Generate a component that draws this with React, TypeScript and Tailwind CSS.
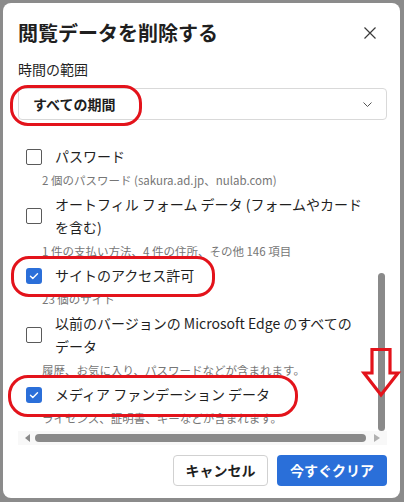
import React from 'react';

const font = { fontFamily: '"Noto Sans CJK JP", "Noto Sans", sans-serif' };

const items = [
  { lines: ['パスワード'], sub: '2 個のパスワード (sakura.ad.jp、nulab.com)', checked: false },
  { lines: ['オートフィル フォーム データ (フォームやカード', 'を含む)'], sub: '1 件の支払い方法、4 件の住所、その他 146 項目', checked: false },
  { lines: ['サイトのアクセス許可'], sub: '23 個のサイト', checked: true },
  { lines: ['以前のバージョンの Microsoft Edge のすべての', 'データ'], sub: '履歴、お気に入り、パスワードなどが含まれます。', checked: false },
  { lines: ['メディア ファンデーション データ'], sub: 'ライセンス、証明書、キーなどが含まれます。', checked: true },
];

function Checkbox({ checked }: { checked: boolean }) {
  if (checked) {
    return (
      <div className="w-[16px] h-[16px] shrink-0 rounded-[3px] bg-[#2b6fd9] flex items-center justify-center">
        <svg width="16" height="16" viewBox="0 0 16 16">
          <path d="M4.5 8.3l2.3 2.2L11.5 5.8" fill="none" stroke="#fff" strokeWidth="1.4" strokeLinecap="round" strokeLinejoin="round" />
        </svg>
      </div>
    );
  }
  return <div className="w-[16px] h-[16px] shrink-0 rounded-[2px] border border-[#5a5a5a] bg-white" />;
}

export default function App() {
  return (
    <div className="relative w-[404px] h-[502px] bg-[#8b8b8b] pt-[3px] pl-[3px]" style={font}>
      <div className="w-[397px] h-[495px] bg-white rounded-[8px] flex flex-col pl-[15px] pr-[13px] text-[#1f1f1f]">
        {/* header */}
        <div className="pt-[16px] flex items-center justify-between h-[44px]">
          <h1 className="text-[20px] leading-[28px] font-semibold">閲覧データを削除する</h1>
          <svg width="12" height="12" viewBox="0 0 12 12" className="mr-[11px]">
            <path d="M0.5 0.5L11.5 11.5M11.5 0.5L0.5 11.5" stroke="#3a3a3a" strokeWidth="1.2" />
          </svg>
        </div>

        <p className="mt-[12px] text-[14px] leading-[20px]">時間の範囲</p>

        <div className="mt-[9px] h-[32px] rounded-[4px] border border-[#d9d9d9] flex items-center justify-between pl-[14px] pr-[14px]">
          <span className="text-[14px] font-bold">すべての期間</span>
          <svg width="9" height="5" viewBox="0 0 9 5">
            <path d="M0.5 0.5L4.5 4.5L8.5 0.5" fill="none" stroke="#555" strokeWidth="1" />
          </svg>
        </div>

        {/* list */}
        <div className="relative h-[311px] overflow-hidden">
          <div className="pt-[25px] pl-[8px] pr-[17px] flex flex-col">
            {items.map((it, i) => (
              <div key={i} className={i === 0 ? '' : 'mt-[4px]'}>
                <div className="flex items-center gap-[13px]">
                  <Checkbox checked={it.checked} />
                  <div className="text-[14px] leading-[23px] whitespace-nowrap">
                    {it.lines.map((l, j) => (
                      <p key={j}>{l}</p>
                    ))}
                  </div>
                </div>
                <p className="mt-[4px] pl-[16px] text-[11.5px] leading-[17px] text-[#767676] whitespace-nowrap">{it.sub}</p>
              </div>
            ))}
          </div>
          <div className="absolute right-[2px] top-[153px] w-[7px] h-[158px] rounded-full bg-[#8a8a8a]" />
        </div>

        {/* horizontal scrollbar */}
        <div className="h-[14px] flex items-center bg-[#f8f8f8] pl-[7px] pr-[7px]">
          <svg width="5" height="8" viewBox="0 0 5 8">
            <path d="M5 0L0 4L5 8Z" fill="#8a8a8a" />
          </svg>
          <div className="ml-[5px] w-[331px] h-[8px] rounded-full bg-[#8a8a8a]" />
          <svg width="6" height="8" viewBox="0 0 6 8" className="ml-[8px]">
            <path d="M0 0L6 4L0 8Z" fill="#b0b0b0" />
          </svg>
        </div>

        {/* footer */}
        <div className="mt-[10px] flex justify-end gap-[9px]">
          <button className="h-[31px] w-[95px] rounded-[4px] border border-[#d1d1d1] bg-white text-[14px] font-bold text-[#1f1f1f]">キャンセル</button>
          <button className="h-[31px] w-[110px] rounded-[4px] bg-[#2a6fd9] text-[14px] font-bold text-white">今すぐクリア</button>
        </div>
      </div>

      {/* red annotations */}
      <div className="absolute left-[10px] top-[85px] w-[132px] h-[41px] rounded-[18px] border-[3px] border-[#e3131b]" />
      <div className="absolute left-[11px] top-[256px] w-[204px] h-[41px] rounded-[18px] border-[3px] border-[#e3131b]" />
      <div className="absolute left-[8px] top-[375px] w-[290px] h-[42px] rounded-[20px] border-[3px] border-[#e3131b]" />
      <svg className="absolute left-[360px] top-[346px]" width="42" height="54" viewBox="0 0 42 54">
        <path d="M12 3.5H30V27H38L21 49L4 27H12Z" fill="none" stroke="#e3131b" strokeWidth="3.2" strokeLinejoin="miter" />
      </svg>
    </div>
  );
}
